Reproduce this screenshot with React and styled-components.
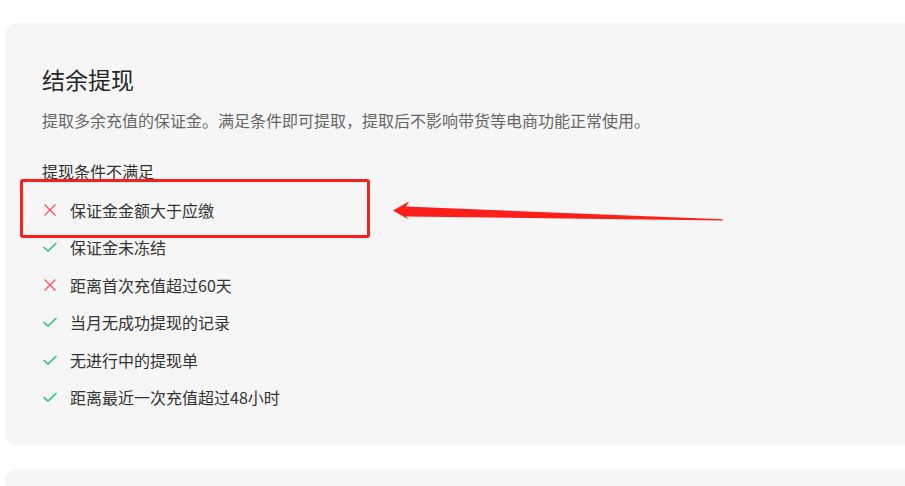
import React from 'react';
import styled, { createGlobalStyle } from 'styled-components';

const GlobalStyle = createGlobalStyle`
body {
  margin: 0;
  background: #ffffff;
  overflow: hidden;
  font-family: "Noto Sans CJK SC", "Noto Sans", sans-serif;
}
`;

const Page = styled.div`
position: relative;
height: 486px;
overflow: hidden;
padding: 23px 0 0 5px;
box-sizing: border-box;
display: flex;
flex-direction: column;
gap: 24px;
`;

const Card = styled.section`
flex-shrink: 0;
background: #f6f6f6;
border-radius: 12px;
margin-right: -30px;
padding: ${(p) => (p.empty ? '0' : '40px 37px 29px')};
height: ${(p) => (p.empty ? '60px' : 'auto')};
`;

const Title = styled.h2`
margin: 0;
font-size: 23px;
line-height: 32px;
font-weight: 400;
color: #262626;
`;

const Desc = styled.p`
margin: 13px 0 0;
font-size: 16px;
line-height: 24px;
color: #666666;
`;

const SubTitle = styled.div`
margin-top: 27px;
font-size: 16px;
line-height: 24px;
color: #333333;
`;

const List = styled.ul`
list-style: none;
margin: 8px 0 0;
padding: 0;
`;

const Row = styled.li`
display: flex;
align-items: center;
height: 37.5px;
font-size: 16px;
color: #333333;
`;

const IconBox = styled.span`
width: 28px;
display: flex;
align-items: center;
`;

const Highlight = styled.div`
position: absolute;
left: 20px;
top: 179px;
width: 344px;
height: 53px;
border: 3px solid #ff1f1a;
border-radius: 3px;
`;

const Arrow = styled.svg`
position: absolute;
left: 0;
top: 0;
`;

const Check = () => (
  <svg width="16" height="12" viewBox="0 0 16 12">
    <path d="M1.5 6 L6 10 L14.5 2" fill="none" stroke="#27c073" strokeWidth="1.5" />
  </svg>
);

const Cross = () => (
  <svg width="16" height="12" viewBox="0 0 16 12">
    <path d="M2.5 0.5 L13.5 11.5 M13.5 0.5 L2.5 11.5" fill="none" stroke="#f4545a" strokeWidth="1.3" />
  </svg>
);

const conditions = [
  { ok: false, text: '保证金金额大于应缴' },
  { ok: true, text: '保证金未冻结' },
  { ok: false, text: '距离首次充值超过60天' },
  { ok: true, text: '当月无成功提现的记录' },
  { ok: true, text: '无进行中的提现单' },
  { ok: true, text: '距离最近一次充值超过48小时' },
];

const App = () => (
  <Page>
    <GlobalStyle />
    <Card>
      <Title>结余提现</Title>
      <Desc>提取多余充值的保证金。满足条件即可提取，提取后不影响带货等电商功能正常使用。</Desc>
      <SubTitle>提现条件不满足</SubTitle>
      <List>
        {conditions.map((c) => (
          <Row key={c.text}>
            <IconBox>{c.ok ? <Check /> : <Cross />}</IconBox>
            {c.text}
          </Row>
        ))}
      </List>
    </Card>
    <Card empty />
    <Highlight />
    <Arrow width="905" height="486" viewBox="0 0 905 486">
      <path
        d="M393 210.5 L409 201.5 L406 206.5 L722.5 219.3 L722.5 220.6 L406 216.5 L409 219.8 Z"
        fill="#ff1f1a"
      />
    </Arrow>
  </Page>
);

export default App;
